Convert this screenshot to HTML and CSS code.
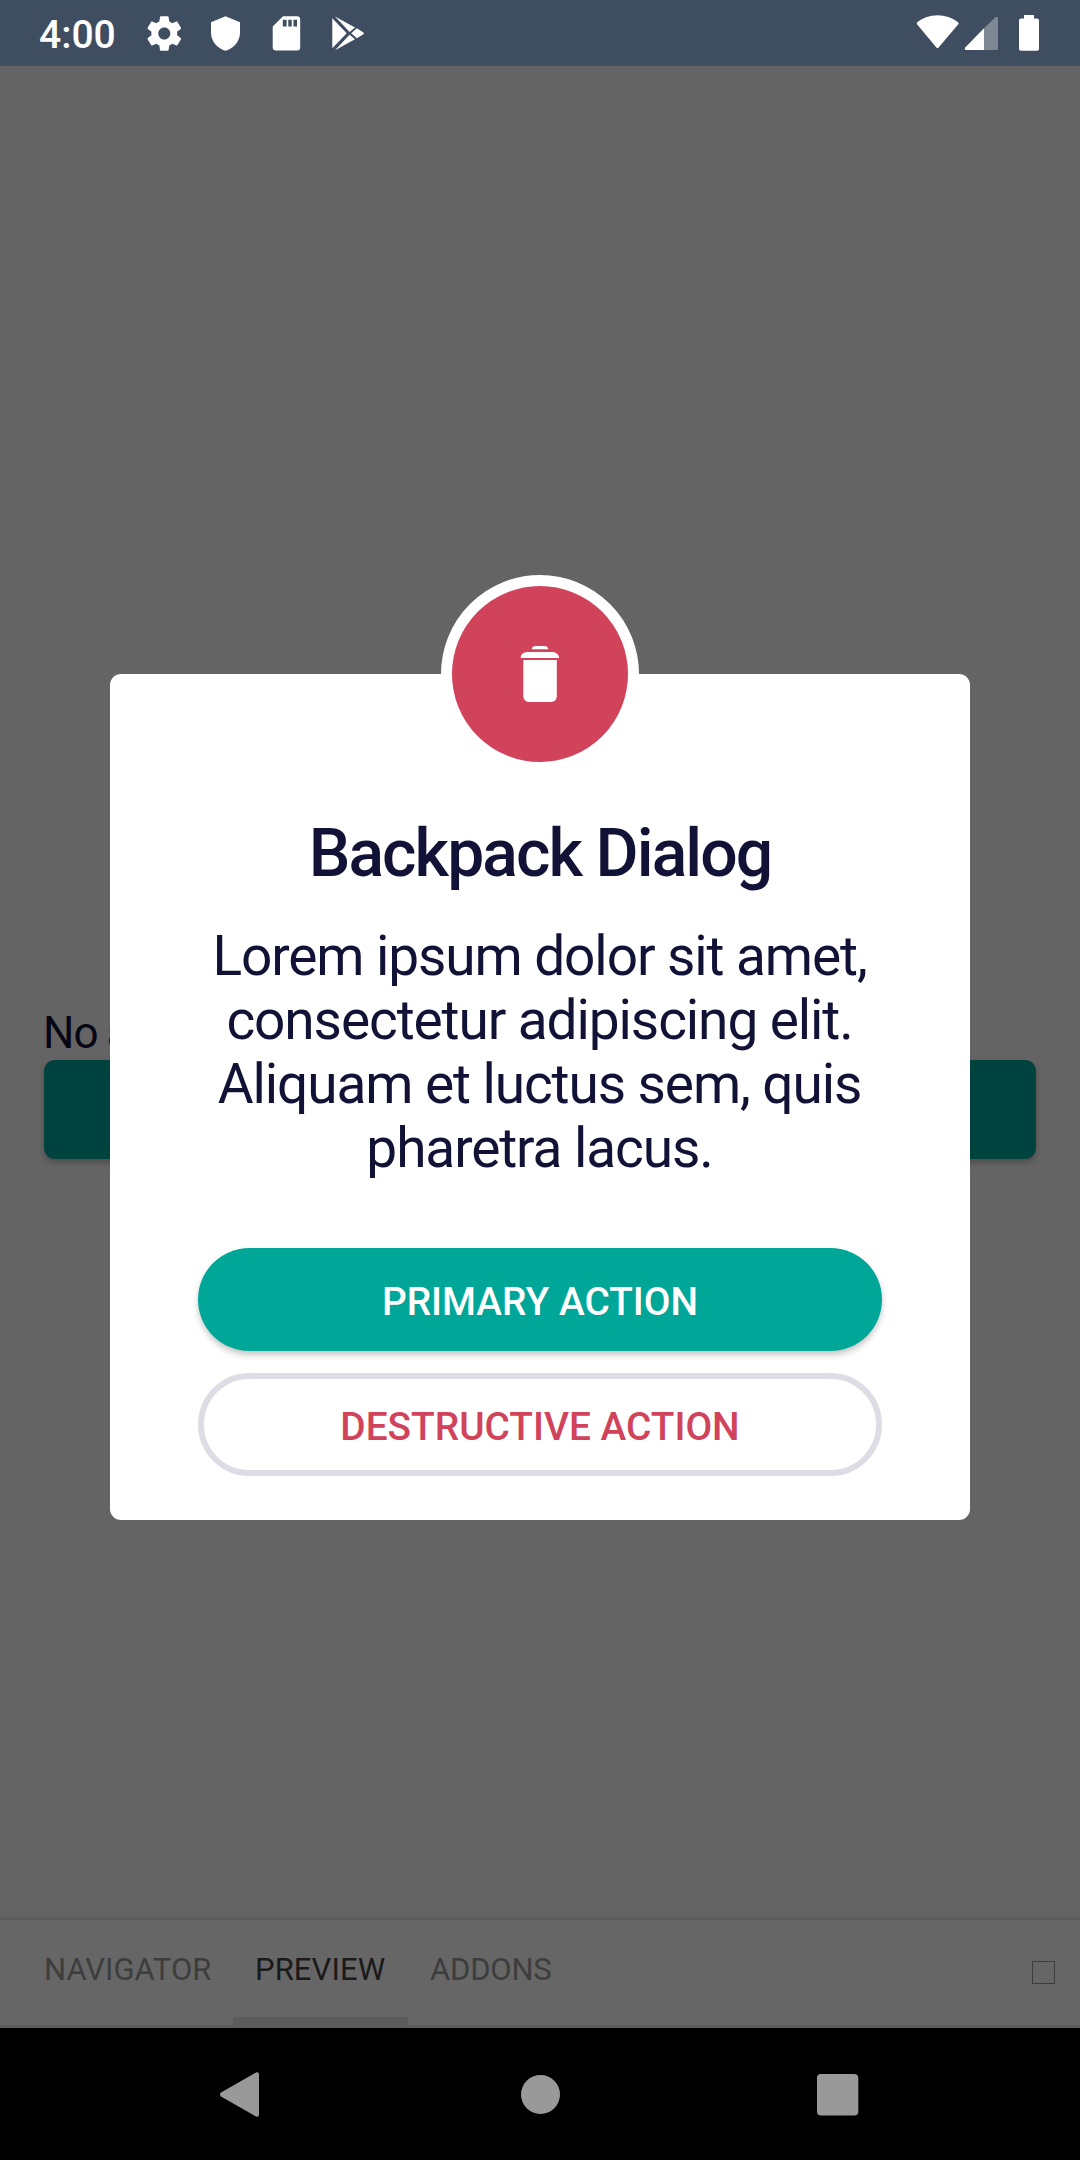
FILE: index.html
```html
<!DOCTYPE html>
<html lang="en">
<head>
<meta charset="utf-8">
<title>Backpack Dialog</title>
<link rel="stylesheet" href="styles.css">
</head>
<body>
<div class="phone">
  <header class="status">
    <span class="clock">4:00</span>
    <svg class="status-left" width="230" height="66" viewBox="140 0 230 66" fill="#fff">
      <path transform="translate(143.6 12.8) scale(1.724)" d="M19.43 12.98c.04-.32.07-.64.07-.98s-.03-.66-.07-.98l2.11-1.65c.19-.15.24-.42.12-.64l-2-3.46c-.12-.22-.39-.3-.61-.22l-2.49 1c-.52-.4-1.08-.73-1.69-.98l-.38-2.65C14.460 2.180 14.250 2 14 2h-4c-.25 0-.46.18-.49.42l-.38 2.65c-.61.25-1.170.59-1.690.98l-2.49-1c-.23-.09-.49 0-.61.22l-2 3.460c-.13.22-.07.49.12.64l2.11 1.650c-.04.32-.07.65-.07.98s.03.66.07.98l-2.110 1.650c-.19.15-.24.42-.12.64l2 3.460c.12.22.39.3.61.22l2.490-1c.52.4 1.080.73 1.690.98l.38 2.650c.03.24.24.42.49.42h4c.25 0 .46-.18.49-.42l.38-2.650c.61-.25 1.170-.59 1.690-.98l2.490 1c.23.09.49 0 .61-.22l2-3.460c.12-.22.07-.49-.12-.64l-2.110-1.650zM12 15.500c-1.930 0-3.500-1.570-3.500-3.500s1.570-3.500 3.500-3.500 3.500 1.570 3.500 3.500-1.570 3.500-3.500 3.500z"/>
      <path d="M225.500 16.300 211 22.200V32.500C211 41 217 48.500 225.500 50.700 234 48.500 240 41 240 32.500V22.200Z"/>
      <path fill-rule="evenodd" d="M283 16.200H297Q300.200 16.200 300.200 19.500V47.300Q300.200 50.500 297 50.500H276Q272.700 50.500 272.700 47.300V26.500ZM282.800 19.700V26.600H286.600V19.700ZM288.300 19.700V26.600H291.700V19.700ZM293.500 19.700V26.600H297V19.700Z"/>
      <path d="M332.300 18.300 346.700 33.200 332.300 48.200ZM335 16.500 355 27.500 349.600 32ZM356.800 28.300 363.500 32.400Q364.300 33.300 363.500 34.200L356.800 38.200 351.200 33.200ZM349.600 34.700 355 39.200 335 50.200Z"/>
    </svg>
    <svg class="status-right" width="130" height="66" viewBox="912 0 130 66" fill="#fff">
      <path d="M917 24.300Q916.300 23 917.500 22 926 15.200 937.500 15.200T957.800 22Q959.300 23 958.300 24.300L938.600 47.600Q937.500 49 936.400 47.600Z"/>
      <path opacity=".33" d="M984 28.300 995.400 17.300Q998 16 998 18.500V48.500Q998 50 996.500 50H984Z"/>
      <path d="M984 28.300V50H966Q964 49.500 965.200 47.400Z"/>
      <path d="M1024 15H1034V18.500H1037Q1039 18.500 1039 20.500V49Q1039 50.800 1037 50.800H1021Q1019 50.800 1019 49V20.500Q1019 18.500 1021 18.500H1024Z"/>
    </svg>
  </header>

  <main class="screen">
    <p class="story-text">No a</p>
    <div class="story-button"></div>
  </main>

  <nav class="tabs">
    <span class="tab navigator">NAVIGATOR</span>
    <span class="tab active">PREVIEW</span>
    <span class="tab addons">ADDONS</span>
    <span class="toggle"></span>
  </nav>

  <footer class="system-nav">
    <svg width="1080" height="132" viewBox="0 2028 1080 132" fill="#999">
      <path d="M221 2092.500 256 2072.500Q259 2071.500 259 2074.500V2114.500Q259 2117.800 256 2116.500L221 2096.500Q219 2094.500 221 2092.500Z"/>
      <circle cx="540.500" cy="2094.500" r="19.500"/>
      <rect x="817" y="2074" width="41.300" height="41.500" rx="4"/>
    </svg>
  </footer>

  <section class="dialog" role="dialog">
    <div class="badge">
      <svg width="40" height="58" viewBox="520 645 40 58" fill="#fff">
        <path d="M531.600 649.200Q532.500 646 535.500 646H544.500Q547.500 646 548.400 649.200Z"/>
        <path d="M520.500 658Q521 652 527.500 652H552.500Q558.500 652.500 559.200 658Z"/>
        <path d="M523.300 660H556.800V696.200Q556.300 701.700 551 701.900H529Q523.800 701.500 523.300 696.200Z"/>
      </svg>
    </div>
    <h1 class="title">Backpack Dialog</h1>
    <p class="message">Lorem ipsum dolor sit amet,<br>consectetur adipiscing elit.<br>Aliquam et luctus sem, quis<br>pharetra lacus.</p>
    <button class="action primary">PRIMARY ACTION</button>
    <button class="action destructive">DESTRUCTIVE ACTION</button>
  </section>
</div>
</body>
</html>
```
FILE: styles.css
```css
* { box-sizing: border-box; }
body { margin: 0; font-family: Roboto, sans-serif; background: #646464; }
svg { display: block; }
.phone {
  position: relative;
  width: 1080px;
  height: 2160px;
  display: flex;
  flex-direction: column;
  overflow: hidden;
}
.status {
  height: 66px;
  display: flex;
  background: #3f4d60;
  color: #fff;
}
.clock {
  width: 140px;
  padding-left: 39px;
  font-size: 39px;
  font-weight: 500;
  line-height: 70px;
}
.status-right { margin-left: auto; margin-right: 38px; }
.screen {
  height: 1851px;
  padding: 941px 44px 0;
  background: #646464;
}
.story-text {
  margin: 0 0 0 -1px;
  height: 53px;
  font-size: 44px;
  line-height: 52px;
  letter-spacing: -0.9px;
  word-spacing: -1px;
  color: #070614;
}
.story-button {
  height: 99px;
  border-radius: 11px;
  background: #00423d;
  box-shadow: 0 3px 6px rgba(0, 0, 0, .25);
}
.tabs {
  height: 111px;
  display: flex;
  padding: 0 22px;
  background: #666;
  border-top: 3px solid #5c5c5c;
  border-bottom: 3px solid #5c5c5c;
}
.tab {
  padding: 0 22px;
  font-size: 31px;
  line-height: 100px;
  color: #3d3d3d;
}
.navigator { width: 211px; }
.active {
  width: 175px;
  letter-spacing: 0.1px;
  color: #1a1a1a;
  box-shadow: inset 0 -8px #5c5c5c;
}
.addons { letter-spacing: -0.2px; }
.toggle {
  width: 23px;
  height: 23px;
  margin: 41px 3px 0 auto;
  border: 1px solid #3d3d3d;
}
.system-nav { height: 132px; background: #000; }
.dialog {
  position: absolute;
  left: 110px;
  top: 674px;
  width: 860px;
  height: 846px;
  padding: 0 88px;
  display: flex;
  flex-direction: column;
  background: #fff;
  border-radius: 11px;
  color: #111236;
  text-align: center;
}
.badge {
  flex: none;
  align-self: center;
  width: 198px;
  height: 198px;
  margin-top: -99px;
  display: flex;
  align-items: center;
  justify-content: center;
  border: 11px solid #fff;
  border-radius: 50%;
  background: #d1435b;
}
.title {
  margin: 42px 0 0;
  font-size: 66px;
  font-weight: 500;
  line-height: 78px;
  letter-spacing: -1.9px;
}
.message {
  margin: 31px -20px 0;
  padding-right: 1px;
  font-size: 55px;
  line-height: 64px;
  letter-spacing: -1.1px;
  white-space: nowrap;
}
.action {
  flex: none;
  height: 103px;
  padding: 4px 0 0;
  border: 0;
  border-radius: 52px;
  font: 500 38.800px/46px Roboto, sans-serif;
}
.primary {
  margin-top: 68px;
  background: #00a698;
  color: #fff;
  box-shadow: 0 4px 6px rgba(0, 0, 0, .22);
}
.destructive {
  margin-top: 22px;
  background: #fff;
  border: 6px solid #dddde5;
  color: #d1435b;
}
```
